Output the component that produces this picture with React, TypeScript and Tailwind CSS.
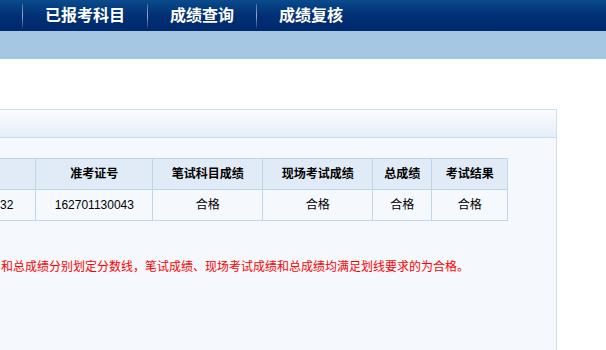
export default function App() {
  const font = { fontFamily: '"Liberation Sans", "Noto Sans CJK SC", sans-serif' };
  const navItems = ["已报考科目", "成绩查询", "成绩复核"];

  return (
    <div className="w-[606px] h-[350px] overflow-hidden bg-white text-black" style={font}>
      {/* top nav */}
      <div className="h-[31px] bg-gradient-to-b from-[#0b4b8c] via-[#022f74] to-[#00296c] flex items-center">
        {navItems.map((t) => (
          <div key={t} className="flex items-center">
            <div className="w-px h-[24px] bg-gradient-to-b from-[#4f6f9f] via-[#9aa8c4] to-[#1c3f7c] ml-[22px]" />
            <span className="ml-[22px] text-white text-[16px] font-bold leading-none">{t}</span>
          </div>
        ))}
      </div>
      <div className="h-[28px] bg-[#a5c7e1]" />

      {/* panel */}
      <div className="mt-[50px] w-[557px] h-[300px] border-t border-r border-[#cfdff0] bg-[#f5f9fd]">
        <div className="h-[28px] bg-gradient-to-b from-[#fbfdff] to-[#e4edf8] border-b border-[#c8dcf0]" />
        <div className="pt-[20px]">
          <table className="border-collapse text-[12px] leading-none">
            <thead>
              <tr className="h-[31px] bg-[#e1ebf7]">
                <th className="w-[35px] border-t border-b border-r border-[#c0d4ea]"></th>
                <th className="w-[117px] border border-[#c0d4ea] font-bold">准考证号</th>
                <th className="w-[110px] border border-[#c0d4ea] font-bold">笔试科目成绩</th>
                <th className="w-[110px] border border-[#c0d4ea] font-bold">现场考试成绩</th>
                <th className="w-[59px] border border-[#c0d4ea] font-bold">总成绩</th>
                <th className="w-[76px] border border-[#c0d4ea] font-bold">考试结果</th>
              </tr>
            </thead>
            <tbody>
              <tr className="h-[31px] text-center">
                <td className="border-b border-r border-[#c0d4ea] text-right pr-[22px]">32</td>
                <td className="border border-[#c0d4ea]">162701130043</td>
                <td className="border border-[#c0d4ea]">合格</td>
                <td className="border border-[#c0d4ea]">合格</td>
                <td className="border border-[#c0d4ea]">合格</td>
                <td className="border border-[#c0d4ea]">合格</td>
              </tr>
            </tbody>
          </table>
          <p className="mt-[37px] pl-px text-[12px] text-[#ff0000] whitespace-nowrap">
            和总成绩分别划定分数线，笔试成绩、现场考试成绩和总成绩均满足划线要求的为合格。
          </p>
        </div>
      </div>
    </div>
  );
}
